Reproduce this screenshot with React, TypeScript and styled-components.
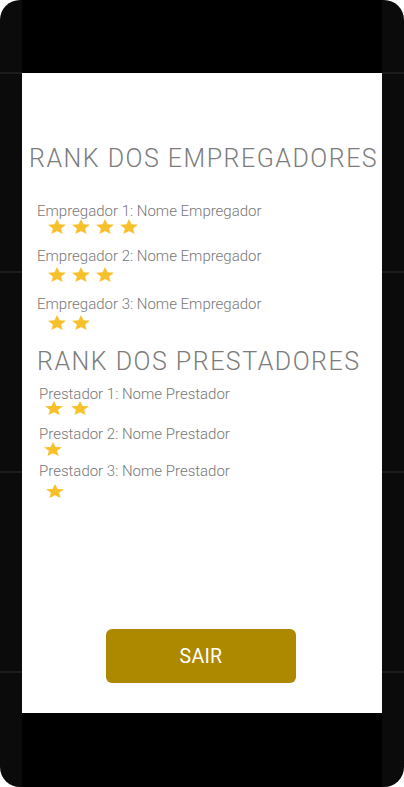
import React from "react";
import styled, { createGlobalStyle } from "styled-components";

const GlobalStyle = createGlobalStyle`
  html, body { margin: 0; padding: 0; background: #ffffff; }
  body { font-family: Roboto, "Noto Sans", sans-serif; }
`;

const Phone = styled.div`
  width: 404px;
  height: 787px;
  border-radius: 20px;
  overflow: hidden;
  display: flex;
  justify-content: center;
  background-color: #0b0b0b;
  background-image:
    linear-gradient(#0b0b0b 0 72px, #1c1c1c 72px 74px, transparent 74px),
    linear-gradient(transparent 0 271px, #1c1c1c 271px 273px, transparent 273px),
    linear-gradient(transparent 0 471px, #1c1c1c 471px 473px, transparent 473px),
    linear-gradient(transparent 0 671px, #1c1c1c 671px 673px, transparent 673px);
`;

const Column = styled.div`
  width: 360px;
  display: flex;
  flex-direction: column;
`;

const BlackBar = styled.div<{ $h: number }>`
  height: ${(p) => p.$h}px;
  background: #000000;
  flex: none;
`;

const Screen = styled.div`
  flex: 1;
  background: #ffffff;
  display: flex;
  flex-direction: column;
  padding: 71px 0 30px 0;
`;

const Title = styled.h1<{ $left: number; $top: number }>`
  margin: ${(p) => p.$top}px 0 0 ${(p) => p.$left}px;
  font-family: Roboto, "Noto Sans", sans-serif;
  font-weight: 300;
  font-size: 25px;
  line-height: 30px;
  color: #7c7c7c;
  letter-spacing: 1.5px;
  white-space: nowrap;
`;

const Item = styled.div<{ $top: number; $left: number }>`
  margin: ${(p) => p.$top}px 0 0 ${(p) => p.$left}px;
  display: flex;
  flex-direction: column;
`;

const ItemText = styled.div`
  font-family: Roboto, "Noto Sans", sans-serif;
  font-weight: 300;
  font-size: 15px;
  line-height: 18px;
  color: #777777;
  white-space: nowrap;
`;

const Stars = styled.div<{ $top: number; $indent: number; $gap: number }>`
  margin: ${(p) => p.$top}px 0 0 ${(p) => p.$indent}px;
  display: flex;
  gap: ${(p) => p.$gap}px;
`;

const StarSvg = styled.svg`
  display: block;
  flex: none;
`;

const Button = styled.button`
  margin: auto auto 0 auto;
  width: 190px;
  height: 54px;
  border: none;
  border-radius: 6px;
  background: #ad8900;
  color: #ffffff;
  font-family: Roboto, "Noto Sans", sans-serif;
  font-weight: 400;
  font-size: 19.5px;
  letter-spacing: 0.3px;
  cursor: pointer;
  transform: translateX(-1px);
`;

const Star = ({ w, h }: { w: number; h: number }) => (
  <StarSvg width={w} height={h} viewBox="2 2 20 19" preserveAspectRatio="none">
    <path
      fill="#f8c12b"
      d="M12 17.27L18.18 21l-1.64-7.03L22 9.24l-7.19-.61L12 2 9.19 8.63 2 9.24l5.46 4.73L5.82 21z"
    />
  </StarSvg>
);

type Entry = {
  label: string;
  stars: number;
  top: number;
  starTop: number;
  indent: number;
};

const employers: Entry[] = [
  { label: "Empregador 1: Nome Empregador", stars: 4, top: 28, starTop: -1, indent: 11 },
  { label: "Empregador 2: Nome Empregador", stars: 3, top: 13, starTop: 2, indent: 11 },
  { label: "Empregador 3: Nome Empregador", stars: 2, top: 13, starTop: 2, indent: 11 },
];

const providers: Entry[] = [
  { label: "Prestador 1: Nome Prestador", stars: 2, top: 8, starTop: -2, indent: 6 },
  { label: "Prestador 2: Nome Prestador", stars: 1, top: 10, starTop: -1, indent: 5 },
  { label: "Prestador 3: Nome Prestador", stars: 1, top: 6, starTop: 4, indent: 7 },
];

export default function App() {
  return (
    <>
      <GlobalStyle />
      <Phone>
        <Column>
          <BlackBar $h={73} />
          <Screen>
            <Title $left={7} $top={0}>RANK DOS EMPREGADORES</Title>
            {employers.map((e) => (
              <Item key={e.label} $top={e.top} $left={15}>
                <ItemText>{e.label}</ItemText>
                <Stars $top={e.starTop} $indent={e.indent} $gap={6}>
                  {Array.from({ length: e.stars }).map((_, i) => (
                    <Star key={i} w={18} h={15} />
                  ))}
                </Stars>
              </Item>
            ))}
            <Title $left={15} $top={17}>RANK DOS PRESTADORES</Title>
            {providers.map((e) => (
              <Item key={e.label} $top={e.top} $left={17}>
                <ItemText>{e.label}</ItemText>
                <Stars $top={e.starTop} $indent={e.indent} $gap={8}>
                  {Array.from({ length: e.stars }).map((_, i) => (
                    <Star key={i} w={18} h={14} />
                  ))}
                </Stars>
              </Item>
            ))}
            <Button>SAIR</Button>
          </Screen>
          <BlackBar $h={74} />
        </Column>
      </Phone>
    </>
  );
}
